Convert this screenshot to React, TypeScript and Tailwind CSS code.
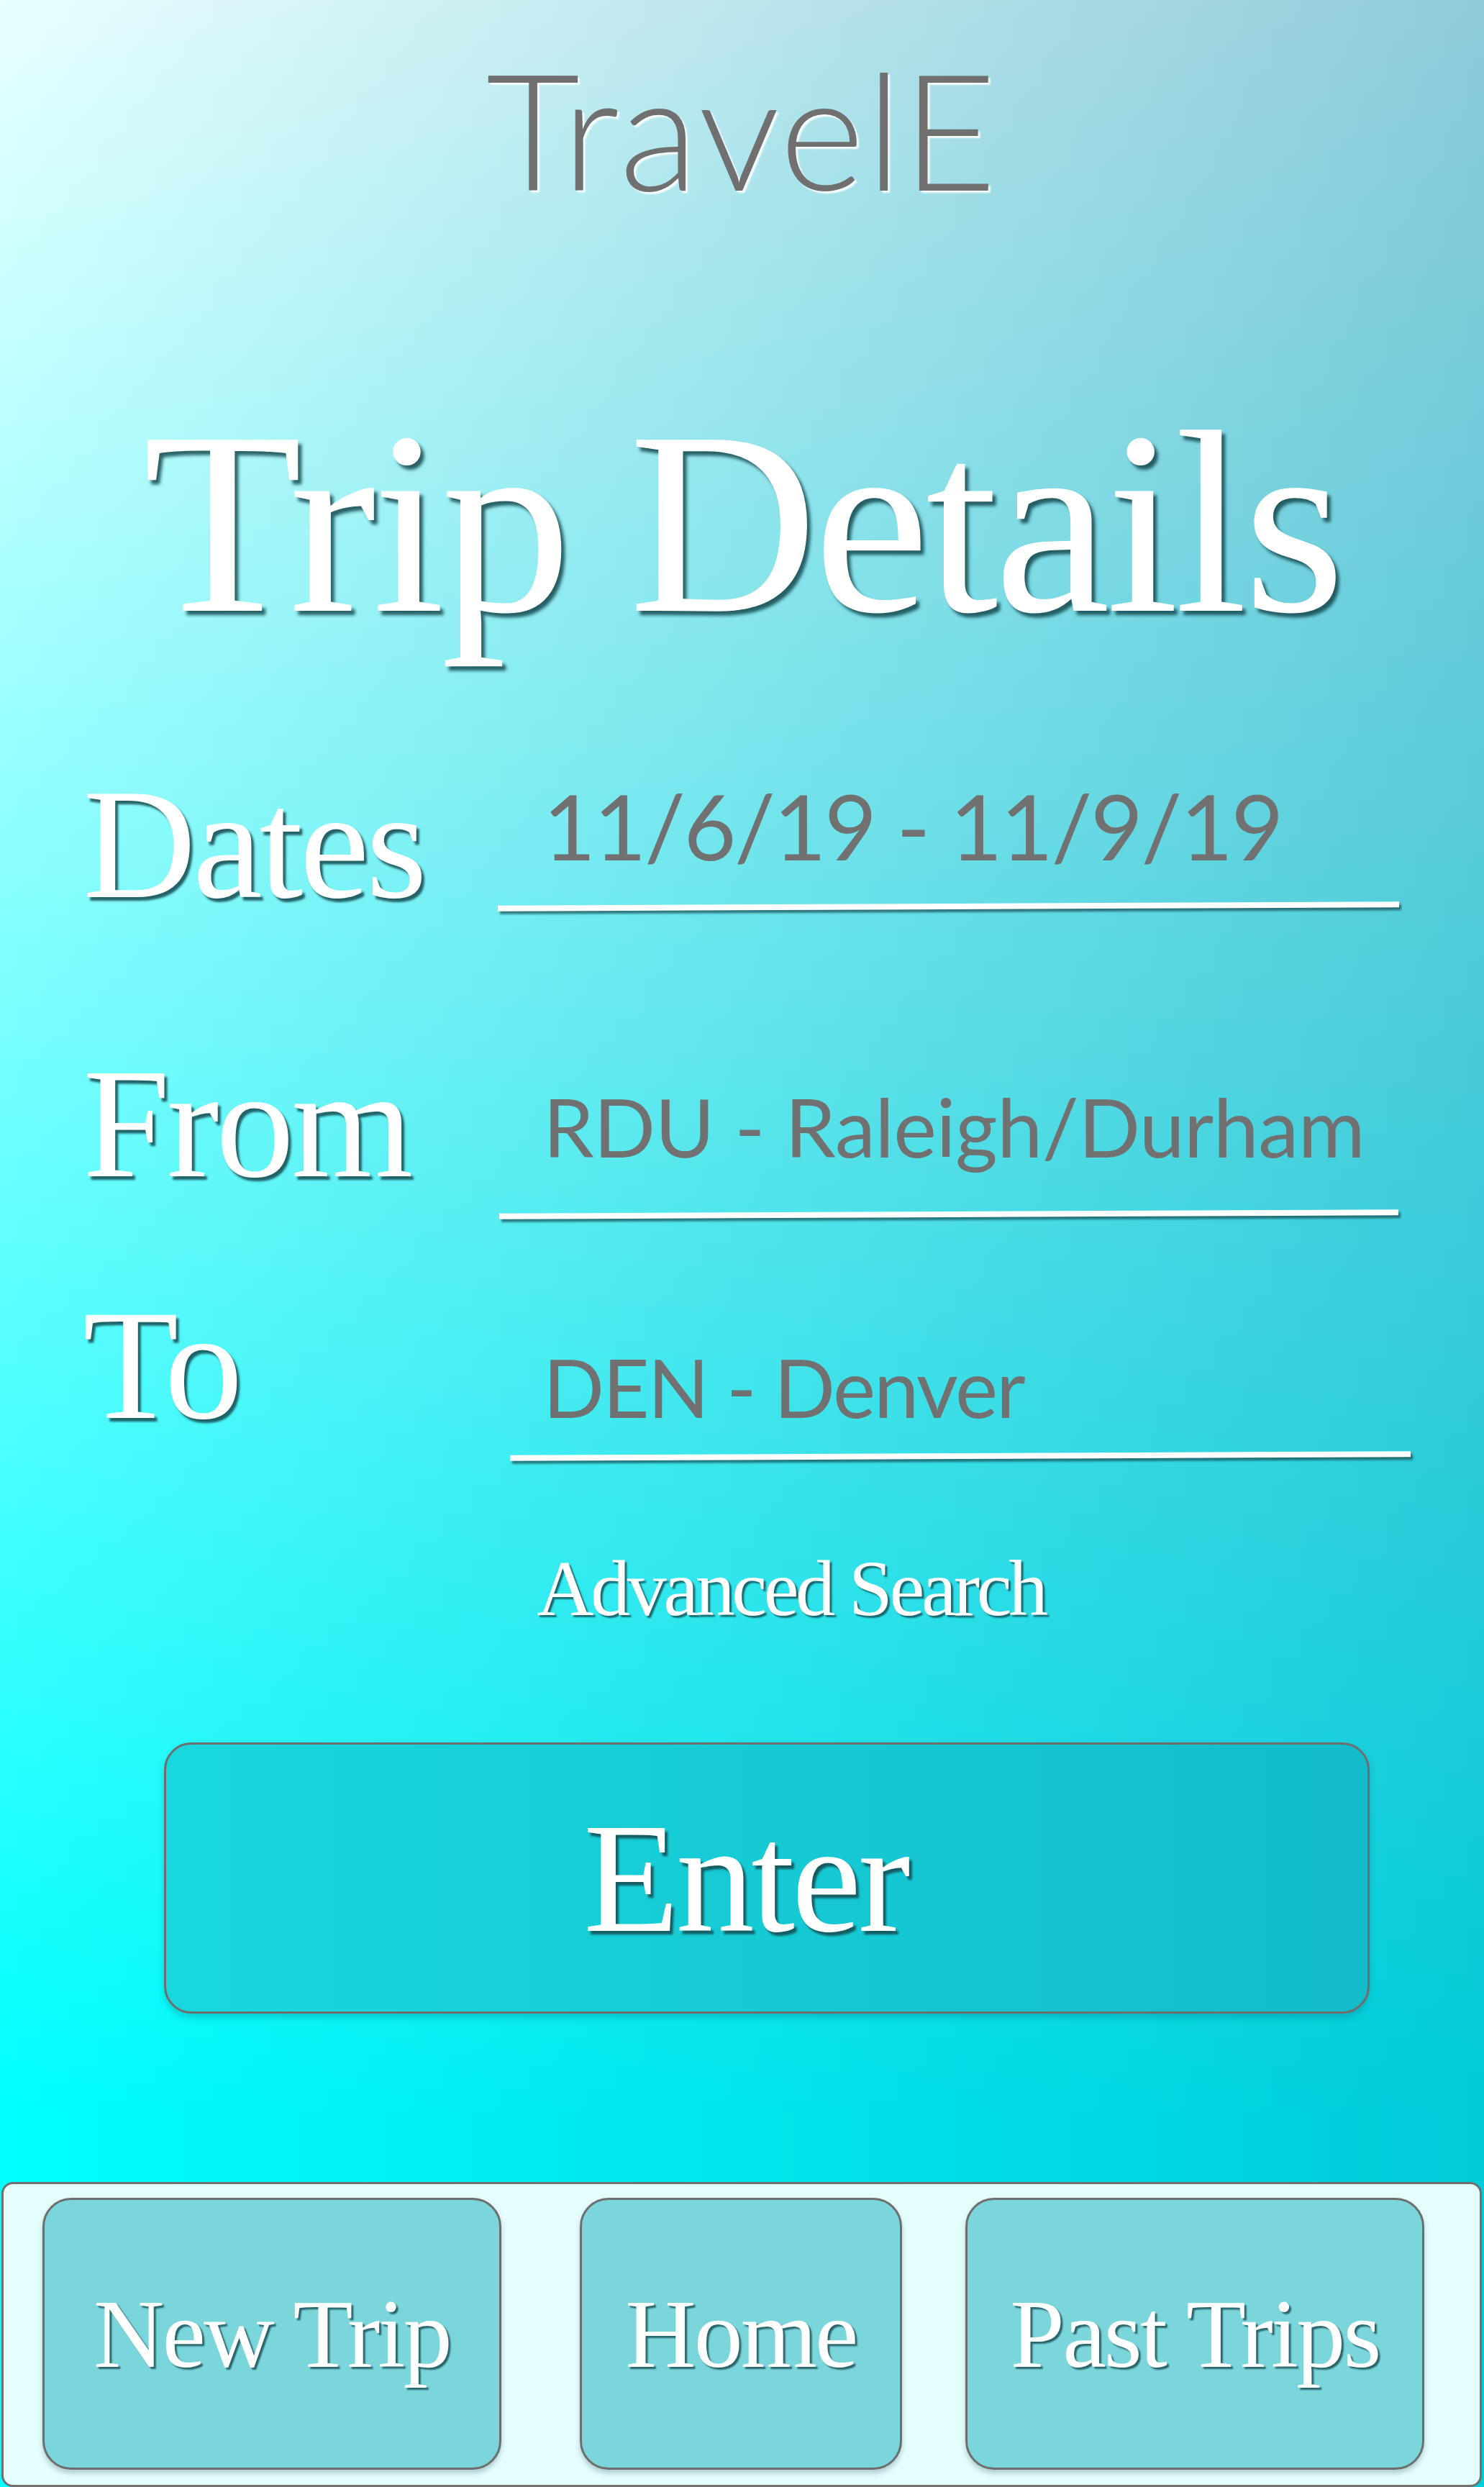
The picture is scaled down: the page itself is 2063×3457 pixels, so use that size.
const serif = "font-['Liberation_Serif','Times_New_Roman',serif]";
const sans = "font-['Lato','Noto_Sans',sans-serif]";
const bigShadow = '[text-shadow:5px_6px_4px_rgba(20,72,78,0.85)]';
const labelShadow = '[text-shadow:4px_5px_3px_rgba(20,72,78,0.85)]';
const smallShadow = '[text-shadow:3px_3px_2px_rgba(20,72,78,0.8)]';

type FieldProps = {
  label: string;
  value: string;
  rowClass: string;
  valueClass: string;
  lineClass: string;
};

function Field({ label, value, rowClass, valueClass, lineClass }: FieldProps) {
  return (
    <div className={`flex items-start ${rowClass}`}>
      <div className={`w-[692px] shrink-0 pl-[115px] text-[218px] leading-none tracking-[-0.02em] text-white ${serif} ${labelShadow}`}>
        {label}
      </div>
      <div className="flex flex-col">
        <div className={`pl-[63px] leading-none whitespace-nowrap text-[#717171] ${sans} ${valueClass}`}>{value}</div>
        <div className={`h-[8px] bg-white -rotate-[0.25deg] shadow-[3px_4px_3px_rgba(20,72,78,0.7)] ${lineClass}`} />
      </div>
    </div>
  );
}

function NavButton({ label, className }: { label: string; className: string }) {
  return (
    <button
      className={`h-[378px] shrink-0 rounded-[40px] border-[3px] border-[#6e6e6e] bg-[#7bd6dc] shadow-[0_5px_6px_rgba(80,120,125,0.35)] flex items-center justify-center text-[136px] leading-none tracking-[-0.02em] text-white whitespace-nowrap ${serif} ${smallShadow} ${className}`}
    >
      {label}
    </button>
  );
}

export default function App() {
  return (
    <div className="w-[2063px] h-[3457px] flex flex-col overflow-hidden bg-blend-multiply bg-[image:linear-gradient(to_right,#ffffff,#9ccbd9),linear-gradient(to_bottom,#eaffff,#00ffff_85%)]">
      <h1 className={`mt-[65px] text-center text-[226px] leading-none font-light tracking-[0.01em] text-[#707070] ${sans} [text-shadow:3px_3px_2px_rgba(255,255,255,0.9)]`}>
        TravelE
      </h1>

      <h2 className={`mt-[255px] text-center text-[363px] leading-none tracking-[-0.015em] text-white ${serif} ${bigShadow}`}>
        Trip Details
      </h2>

      <div className="mt-[156px] flex flex-col">
        <Field
          label="Dates"
          value="11/6/19 - 11/9/19"
          rowClass="h-[388px]"
          valueClass="mt-[20px] text-[126px] tracking-[-0.02em]"
          lineClass="mt-[45px] w-[1253px]"
        />
        <Field
          label="From"
          value="RDU - Raleigh/Durham"
          rowClass="h-[336px]"
          valueClass="mt-[56px] text-[113px] tracking-[-0.005em]"
          lineClass="mt-[62px] ml-[2px] w-[1250px]"
        />
        <Field
          label="To"
          value="DEN - Denver"
          rowClass="h-[239px]"
          valueClass="mt-[83px] text-[112px] tracking-[-0.02em]"
          lineClass="mt-[36px] ml-[17px] w-[1252px]"
        />
      </div>

      <div className={`mt-[125px] pl-[746px] text-[110px] leading-none tracking-[-0.04em] text-white ${serif} ${smallShadow}`}>
        Advanced Search
      </div>

      <button
        className={`mt-[159px] ml-[228px] w-[1676px] h-[377px] rounded-[38px] border-[3px] border-[#6e6e6e] bg-linear-to-r from-[#19d8dd] to-[#13bccb] shadow-[0_6px_8px_rgba(0,90,100,0.25)] flex items-center justify-center pr-[60px] text-[218px] leading-none tracking-[-0.02em] text-white ${serif} ${labelShadow}`}
      >
        Enter
      </button>

      <nav className="mt-[234px] ml-[2px] w-[2058px] h-[424px] shrink-0 rounded-[16px] border-[3px] border-[#707070] bg-[#e4fdfd] flex items-start pt-[19px] pl-[54px]">
        <NavButton label="New Trip" className="w-[638px]" />
        <NavButton label="Home" className="ml-[109px] w-[448px]" />
        <NavButton label="Past Trips" className="ml-[88px] w-[638px]" />
      </nav>
    </div>
  );
}
